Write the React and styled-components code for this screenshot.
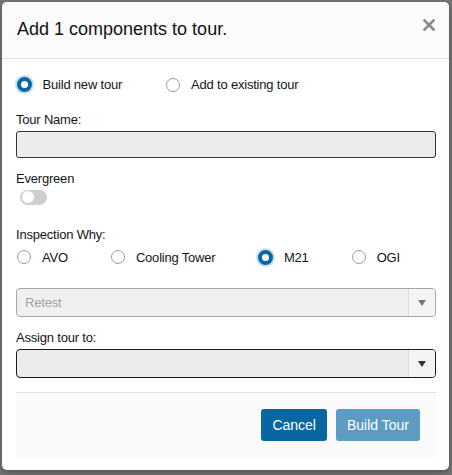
import React from 'react';
import styled, { createGlobalStyle } from 'styled-components';

const GlobalStyle = createGlobalStyle`
  html, body {
    margin: 0;
    padding: 0;
    background: #767676;
    font-family: "Liberation Sans", Arial, sans-serif;
  }
`;

const Backdrop = styled.div`
  width: 452px;
  height: 475px;
  padding: 2px 0 0 2px;
  box-sizing: border-box;
  background: #767676;
  overflow: hidden;
`;

const Modal = styled.div`
  width: 447px;
  height: 468px;
  background: #fff;
  border-radius: 5px;
  box-shadow: 0 2px 6px rgba(0, 0, 0, 0.35);
  display: flex;
  flex-direction: column;
  overflow: hidden;
`;

const Header = styled.div`
  height: 56px;
  display: flex;
  align-items: center;
  justify-content: space-between;
  padding: 0 15px;
  background: #fbfbfb;
  border-bottom: 1px solid #e3e3e3;
`;

const Title = styled.h4`
  margin: 0;
  font-size: 18px;
  font-weight: normal;
  color: #111;
`;

const Close = styled.button`
  border: 0;
  background: none;
  padding: 0;
  width: 12px;
  height: 12px;
  margin-right: -1px;
  margin-top: -10px;
  cursor: pointer;
  display: flex;
`;

const Body = styled.div`
  padding: 16px 13px 13px 14px;
  display: flex;
  flex-direction: column;
`;

const Label = styled.div`
  font-size: 13px;
  letter-spacing: -0.2px;
  line-height: 16px;
  color: #151515;
  margin-top: ${p => p.top || 0}px;
`;

const RadioRow = styled.div`
  display: flex;
  align-items: center;
  gap: ${p => p.gap || 43}px;
  height: 20px;
  margin-top: ${p => p.top || 0}px;
`;

const Option = styled.label`
  display: flex;
  align-items: center;
  gap: 11px;
  font-size: 13px;
  letter-spacing: -0.2px;
  color: #151515;
  cursor: pointer;
`;

const Dot = styled.span`
  box-sizing: border-box;
  width: ${p => (p.checked ? 15 : 14)}px;
  height: ${p => (p.checked ? 15 : 14)}px;
  margin-left: ${p => (p.checked ? 0.5 : 1)}px;
  border-radius: 50%;
  background: #fff;
  border: ${p => (p.checked ? '4.5px solid #0b67a0' : '1px solid #9b9b9b')};
  box-shadow: ${p => (p.checked ? '0 0 0 2px rgba(11, 103, 160, 0.22)' : 'none')};
`;

const TextInput = styled.div`
  box-sizing: border-box;
  height: 27px;
  margin-top: 3px;
  background: #ececec;
  border: 1px solid #30343a;
  border-radius: 3px;
`;

const Toggle = styled.span`
  display: block;
  width: 27px;
  height: 15px;
  margin: 2.5px 0 0 4px;
  border-radius: 8px;
  background: #cfcfcf;
  position: relative;

  &::after {
    content: '';
    position: absolute;
    left: 1.5px;
    top: 1.5px;
    width: 12px;
    height: 12px;
    border-radius: 50%;
    background: #fff;
  }
`;

const Select = styled.div`
  box-sizing: border-box;
  height: 29px;
  margin-top: ${p => p.top || 0}px;
  display: flex;
  background: ${p => (p.disabled ? '#f0f0f0' : '#ececec')};
  border: 1px solid ${p => (p.disabled ? '#a6a6a6' : '#1c1c1c')};
  border-radius: 4px;
  overflow: hidden;
`;

const SelectValue = styled.div`
  flex: 1;
  display: flex;
  align-items: center;
  padding-left: 8px;
  font-size: 13px;
  letter-spacing: -0.2px;
  color: #a3a3a3;
`;

const Caret = styled.div`
  width: 26px;
  display: flex;
  align-items: center;
  justify-content: center;
  border-left: 1px solid #dcdcdc;
  background: #f4f4f4;

  &::after {
    content: '';
    border-left: 4.5px solid transparent;
    border-right: 4.5px solid transparent;
    border-top: 6px solid ${p => (p.disabled ? '#777' : '#333')};
    margin-top: 1px;
  }
`;

const Divider = styled.div`
  height: 1px;
  background: #dde1e6;
  margin-top: 14px;
`;

const Footer = styled.div`
  background: #fafafa;
  padding: 16px;
  display: flex;
  justify-content: flex-end;
  gap: 9px;
`;

const Button = styled.button`
  height: 32px;
  padding: 0 11px;
  border: 0;
  border-radius: 3px;
  font-family: inherit;
  font-size: 14px;
  color: #fff;
  background: ${p => (p.disabled ? '#5c9bc2' : '#0867a1')};
  cursor: ${p => (p.disabled ? 'default' : 'pointer')};
`;

const CloseIcon = () => (
  <svg width="12" height="12" viewBox="0 0 12 12">
    <path d="M1.5 1.5 L10.5 10.5 M10.5 1.5 L1.5 10.5" stroke="#8a8a8a" strokeWidth="2.6" strokeLinecap="square" />
  </svg>
);

const Radio = ({ checked, children }) => (
  <Option>
    <Dot checked={checked} />
    {children}
  </Option>
);

export default function App() {
  const why = ['AVO', 'Cooling Tower', 'M21', 'OGI'];

  return (
    <Backdrop>
      <GlobalStyle />
      <Modal>
        <Header>
          <Title>Add 1 components to tour.</Title>
          <Close aria-label="close"><CloseIcon /></Close>
        </Header>
        <Body>
          <RadioRow>
            <Radio checked>Build new tour</Radio>
            <Radio>Add to existing tour</Radio>
          </RadioRow>

          <Label top={17}>Tour Name:</Label>
          <TextInput />

          <Label top={13.5}>Evergreen</Label>
          <Toggle />

          <Label top={22}>Inspection Why:</Label>
          <RadioRow top={4.5} gap={42}>
            {why.map(w => (
              <Radio key={w} checked={w === 'M21'}>{w}</Radio>
            ))}
          </RadioRow>

          <Select disabled top={21}>
            <SelectValue>Retest</SelectValue>
            <Caret disabled />
          </Select>

          <Label top={13}>Assign tour to:</Label>
          <Select top={3}>
            <SelectValue />
            <Caret />
          </Select>

          <Divider />
          <Footer>
            <Button>Cancel</Button>
            <Button disabled>Build Tour</Button>
          </Footer>
        </Body>
      </Modal>
    </Backdrop>
  );
}
